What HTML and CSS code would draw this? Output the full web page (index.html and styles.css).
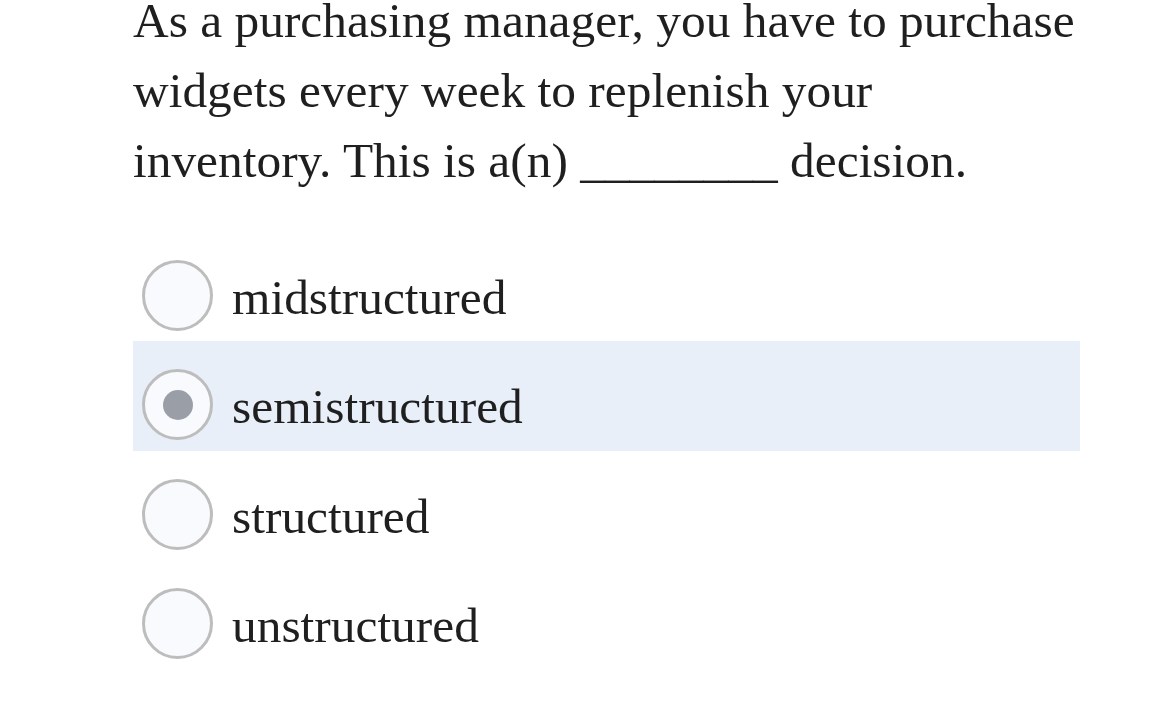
FILE: index.html
```html
<!DOCTYPE html>
<html>
<head>
<meta charset="utf-8">
<link rel="stylesheet" href="styles.css">
</head>
<body>
<div class="question">
  <p class="prompt">As a purchasing manager, you have to purchase widgets every week to replenish your inventory. This is a(n) ________ decision.</p>
  <div class="options">
    <div class="option">
      <span class="radio"></span>
      <span class="label">midstructured</span>
    </div>
    <div class="option selected">
      <span class="radio"><span class="dot"></span></span>
      <span class="label">semistructured</span>
    </div>
    <div class="option">
      <span class="radio"></span>
      <span class="label">structured</span>
    </div>
    <div class="option">
      <span class="radio"></span>
      <span class="label">unstructured</span>
    </div>
  </div>
</div>
</body>
</html>
```

FILE: styles.css
```css
html, body {
  margin: 0;
  padding: 0;
  background: #ffffff;
}
body {
  font-family: "Liberation Serif", "Times New Roman", serif;
  color: #1f1f1f;
  overflow: hidden;
}
.question {
  width: 947px;
  margin-left: 133px;
  margin-top: -14px;
}
.prompt {
  margin: 0;
  font-size: 49.4px;
  line-height: 70px;
}
.options {
  margin-top: 35.5px;
  display: flex;
  flex-direction: column;
}
.option {
  height: 109.5px;
  box-sizing: border-box;
  padding-top: 28px;
  display: flex;
  align-items: flex-start;
}
.option.selected {
  background: #e8eff9;
}
.radio {
  width: 71px;
  height: 71px;
  box-sizing: border-box;
  margin-left: 9px;
  border: 3px solid #bdbdbd;
  border-radius: 50%;
  background: #f8fafd;
  display: flex;
  align-items: center;
  justify-content: center;
  flex: none;
}
.dot {
  width: 30px;
  height: 30px;
  border-radius: 50%;
  background: #9a9ea6;
}
.label {
  margin-left: 19px;
  font-size: 49.4px;
  line-height: 71px;
  padding-top: 2px;
}
```
